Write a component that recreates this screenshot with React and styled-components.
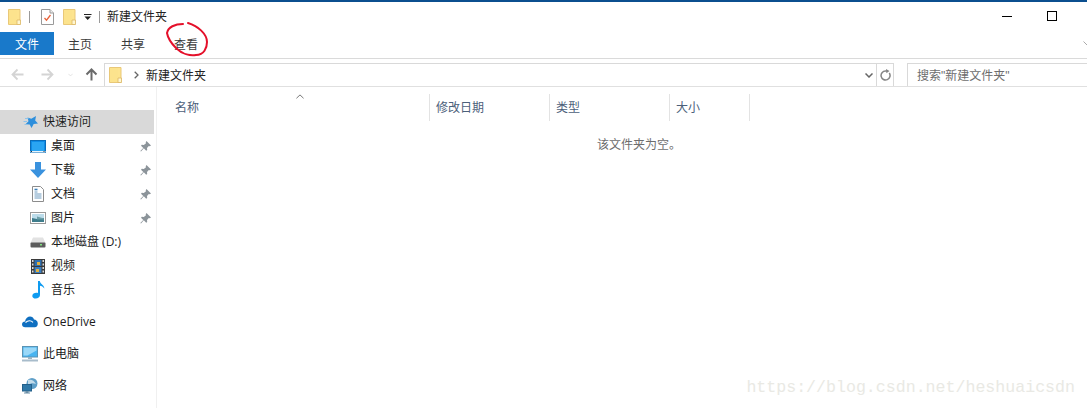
import React from "react";
import styled, { createGlobalStyle } from "styled-components";

const Global = createGlobalStyle`
  html, body { margin: 0; padding: 0; background: #fff; overflow: hidden; }
  * { box-sizing: border-box; }
  #root { font-family: "Noto Sans CJK SC", "Liberation Sans", sans-serif; font-size: 12px; color: #1a1a1a; }
`;

const Window = styled.div`
  position: relative;
  width: 1087px;
  height: 408px;
  overflow: hidden;
  background: #fff;
  border-top: 2px solid #0b4f8f;
  display: flex;
  flex-direction: column;
`;
const TitleBar = styled.div`
  height: 30px;
  display: flex;
  align-items: center;
  padding-left: 8px;
  flex: none;
`;
const QuickBtn = styled.span`
  display: flex;
  margin-left: ${(p) => p.$ml || 0}px;
`;
const VSep = styled.span`
  width: 1px;
  height: 12px;
  background: #9a9a9a;
  margin-left: ${(p) => p.$ml}px;
`;
const TitleText = styled.span`
  margin-left: 7px;
  line-height: 16px;
  padding-bottom: 2px;
  color: #222;
`;
const WinControls = styled.div`
  margin-left: auto;
  display: flex;
  align-items: center;
  padding-right: 30px;
  gap: 35px;
  margin-top: -2px;
`;
const MinLine = styled.span`
  width: 10px;
  height: 1px;
  background: #000;
`;
const MaxBox = styled.span`
  width: 10px;
  height: 10px;
  border: 1px solid #000;
`;
const Ribbon = styled.div`
  height: 27px;
  display: flex;
  align-items: flex-start;
  border-bottom: 1px solid #dadada;
  position: relative;
  flex: none;
`;
const Tab = styled.div`
  width: ${(p) => p.$w}px;
  height: 23px;
  display: flex;
  align-items: center;
  justify-content: ${(p) => (p.$file ? "center" : "flex-start")};
  padding-left: ${(p) => (p.$file ? 0 : p.$pl)}px;
  background: ${(p) => (p.$file ? "#1979ca" : "transparent")};
  color: ${(p) => (p.$file ? "#fff" : "#3b3b3b")};
`;
const RibbonChevron = styled.span`
  position: absolute;
  right: -4px;
  top: 9px;
  display: flex;
`;
const AddressRow = styled.div`
  height: 28px;
  display: flex;
  align-items: flex-end;
  border-bottom: 1px solid #e0e0e0;
  flex: none;
`;
const NavGroup = styled.div`
  width: 104px;
  height: 23px;
  display: flex;
  align-items: center;
  padding-left: 11px;
`;
const NavIcon = styled.span`
  display: flex;
  margin-left: ${(p) => p.$ml || 0}px;
`;
const AddressBox = styled.div`
  width: 790px;
  height: 23px;
  border: 1px solid #d9d9d9;
  border-bottom: none;
  display: flex;
  align-items: center;
  padding-left: 4px;
`;
const Crumb = styled.span`
  margin-left: ${(p) => p.$ml}px;
  padding-bottom: ${(p) => p.$pb || 0}px;
  display: flex;
  align-items: center;
  color: #222;
`;
const AddressTail = styled.div`
  margin-left: auto;
  display: flex;
  height: 100%;
  align-items: center;
`;
const Refresh = styled.span`
  width: 17px;
  height: 100%;
  border-left: 1px solid #d9d9d9;
  margin-left: 3px;
  display: flex;
  align-items: center;
  justify-content: center;
`;
const SearchBox = styled.div`
  margin-left: 13px;
  flex: 1;
  height: 23px;
  border: 1px solid #d9d9d9;
  border-right: none;
  border-bottom: none;
  padding: 0 0 2px 9px;
  display: flex;
  align-items: center;
  font-family: "Liberation Sans", "Noto Sans CJK SC", sans-serif;
  color: #6d6d6d;
`;
const Body = styled.div`
  flex: 1;
  display: flex;
  min-height: 0;
`;
const Sidebar = styled.div`
  width: 157px;
  flex: none;
  border-right: 1px solid #f0f0f0;
  padding-top: 23px;
  font-family: "Open Sans", "Noto Sans CJK SC", sans-serif;
`;
const Group = styled.div`
  margin-bottom: ${(p) => p.$mb || 0}px;
`;
const NavRow = styled.div`
  height: 24px;
  width: 154px;
  display: flex;
  align-items: center;
  padding-left: ${(p) => (p.$child ? 30 : 22)}px;
  background: ${(p) => (p.$active ? "#d9d9d9" : "transparent")};
  color: #1c1c1c;
`;
const NavGlyph = styled.span`
  width: 16px;
  height: 18px;
  margin-right: 5px;
  display: flex;
  align-items: center;
  justify-content: center;
  flex: none;
`;
const NavLabel = styled.span`
  padding-bottom: ${(p) => (p.$latin ? 1 : 3)}px;
`;
const PinWrap = styled.span`
  margin-left: auto;
  margin-right: 3px;
  display: flex;
`;
const Content = styled.div`
  flex: 1;
  min-width: 0;
`;
const Columns = styled.div`
  display: flex;
  height: 27px;
  margin-top: 7px;
`;
const Column = styled.div`
  position: relative;
  width: ${(p) => p.$w}px;
  padding: 0 0 2px ${(p) => p.$pl}px;
  border-right: 1px solid #e3e3e3;
  display: flex;
  align-items: center;
  color: #4c607a;
`;
const SortMark = styled.span`
  position: absolute;
  left: 139px;
  top: 0;
  display: flex;
`;
const Empty = styled.div`
  margin-top: 14px;
  padding-left: 440px;
  line-height: 18px;
  color: #6d6d6d;
`;
const Watermark = styled.div`
  position: absolute;
  right: 12px;
  bottom: 10px;
  font-family: "Liberation Mono", monospace;
  font-size: 16.6px;
  line-height: 20px;
  color: #e9e9e4;
`;
const Scribble = styled.svg`
  position: absolute;
  left: 160px;
  top: 18px;
`;

const Folder = () => (
  <svg width="13" height="16" viewBox="0 0 13 16">
    <path d="M.5.5h11.500v15H.5z" fill="#fde48f" stroke="#e9c878" />
    <path d="M1 1h8v14H1z" fill="#fce38d" />
    <path d="M9 11h3.500v4.500H9z" fill="#fff6cf" stroke="#dcb868" strokeWidth=".8" />
  </svg>
);
const CheckDoc = () => (
  <svg width="13" height="16" viewBox="0 0 13 16">
    <path d="M.5.5h8.500l3.500 3.500v11.500H.5z" fill="#fff" stroke="#9a9a9a" />
    <path d="M9 .5v3.500h3.500" fill="#eee" stroke="#9a9a9a" />
    <path d="M3.500 9l2 2.200L9.500 6" fill="none" stroke="#e8623a" strokeWidth="1.300" />
  </svg>
);
const DropArrow = () => (
  <svg width="8" height="8" viewBox="0 0 8 8">
    <path d="M0 1h7.500v1H0zM.5 3.500h6.500L3.700 7z" fill="#222" />
  </svg>
);
const Arrow = ({ dir = "left", color = "#d4d4d4", w = 1.800, size = 13 }) => (
  <svg width={size} height={size} viewBox="0 0 13 13" style={{ transform: dir === "right" ? "scaleX(-1)" : dir === "up" ? "rotate(90deg)" : "none" }}>
    <path d="M12.500 6.500H1.500M6.500 1.500l-5 5 5 5" fill="none" stroke={color} strokeWidth={w} />
  </svg>
);
const Chev = ({ color = "#777", w = 1.500, width = 8, height = 5 }) => (
  <svg width={width} height={height} viewBox="0 0 8 5">
    <path d="M.5.5L4 4 7.500.5" fill="none" stroke={color} strokeWidth={w} />
  </svg>
);
const RefreshIcon = () => (
  <svg width="11" height="12" viewBox="0 0 11 12">
    <path d="M9.300 4A4.500 4.500 0 1 1 5.500 2H7" fill="none" stroke="#858585" strokeWidth="1.500" />
    <path d="M6 0l3.500 2L6.400 4.300z" fill="#858585" />
  </svg>
);
const Pin = () => (
  <svg width="11" height="11" viewBox="0 0 11 11">
    <path d="M6.500 0L11 4.500 9.800 5.300 8.800 4.900 7 7l.2 2-1 .8L3.800 7.200 1 10.500.3 10l3-3L1 4.800l.8-1 2 .2L6 2.200l-.3-1z" fill="#8c949a" />
  </svg>
);
const StarIcon = () => (
  <svg width="16" height="14" viewBox="0 0 16 14">
    <path d="M14 1l-.8 4.600 2.800 3-4.300.5L9.500 13 7.700 9.400 3.500 9.300l3-3L5.500 2.500l3.800 1.300z" fill="#2e8fdc" />
    <path d="M3 3.500h3.500M1.500 6.500h3.500M2.500 9.500h3" stroke="#8fc3ea" strokeWidth="1" />
  </svg>
);
const DesktopIcon = () => (
  <svg width="16" height="13" viewBox="0 0 16 13">
    <rect x=".5" y=".5" width="15" height="12" fill="#0f8ce6" stroke="#0a6cb8" />
    <path d="M2 2h12v9H2z" fill="#2aa5f2" />
    <path d="M.5 11h15v1.500H.5z" fill="#e8f4fc" />
    <path d="M1 11.500h1M13.500 11.500h1" stroke="#333" />
  </svg>
);
const DownloadIcon = () => (
  <svg width="16" height="16" viewBox="0 0 16 16">
    <path d="M5 0h6v7.500h5L8 16 0 7.500h5z" fill="#3a92de" />
  </svg>
);
const DocIcon = () => (
  <svg width="12" height="16" viewBox="0 0 12 16">
    <path d="M.5.5h8l3 3v12H.5z" fill="#fff" stroke="#8c8c8c" />
    <path d="M2.500 6h3M2.500 8h7M2.500 10h7M2.500 12h7" stroke="#6f9cc0" />
    <path d="M2.500 3.500h3" stroke="#3a7fb8" strokeWidth="1.600" />
  </svg>
);
const PictureIcon = () => (
  <svg width="16" height="12" viewBox="0 0 16 12">
    <rect x=".5" y=".5" width="15" height="11" fill="#fff" stroke="#9a9a9a" />
    <path d="M2 2h12v5H2z" fill="#bcdcea" />
    <path d="M2 6l5 1 7-1v4H2z" fill="#3f7d8c" />
    <path d="M7 4.500l7 2v1H7z" fill="#6d9fa8" />
  </svg>
);
const DriveIcon = () => (
  <svg width="16" height="11" viewBox="0 0 16 11">
    <path d="M3 .5h10L15.500 6H.5z" fill="#e2e2e2" />
    <rect x=".5" y="5.500" width="15" height="5" rx="1" fill="#5c5c5c" />
    <rect x="10" y="7" width="2" height="1.500" fill="#7fe07f" />
  </svg>
);
const VideoIcon = () => (
  <svg width="14" height="15" viewBox="0 0 14 15">
    <rect width="14" height="15" fill="#3a3a3a" />
    <path d="M1 1h1.500v2H1zM1 4.500h1.500v2H1zM1 8h1.500v2H1zM1 11.500h1.500v2H1zM11.500 1H13v2h-1.500zM11.500 4.500H13v2h-1.500zM11.500 8H13v2h-1.500zM11.500 11.500H13v2h-1.500z" fill="#ddd" />
    <path d="M3.500 1h7v6h-7z" fill="#2f6fb0" />
    <path d="M3.500 8h7v6h-7z" fill="#3c7fc0" />
    <path d="M6 3h3v3H6zM5 10h3v3H5z" fill="#e0b040" />
  </svg>
);
const MusicIcon = () => (
  <svg width="13" height="18" viewBox="0 0 13 18">
    <path d="M6 0h1.800c.4 3 4.200 3.600 4.600 7.500-1.200-1.800-3-2.500-4.400-2.800V14c0 2.200-2 3.600-4.300 3.600C1.600 17.600.3 16.500.3 15c0-2 2.100-3.200 4-3.200.6 0 1.200.1 1.700.3z" fill="#0f9bf0" />
  </svg>
);
const CloudIcon = () => (
  <svg width="16" height="12" viewBox="0 0 16 12">
    <path d="M3 5.500C3.500 2 6 .5 8 .5c2 0 3.500 1.200 4 3C14 3.700 15.700 5 15.800 7.500c.1 2-1.200 3.800-3 3.800H3.200C1.300 11.300 0 10 0 8.300 0 6.800 1.200 5.600 3 5.500z" fill="#0f6fc0" />
    <path d="M3.500 6.500c2.500-2.500 5.500-2.300 7.500-.2" fill="none" stroke="#fff" strokeWidth="1.100" />
  </svg>
);
const PcIcon = () => (
  <svg width="16" height="16" viewBox="0 0 16 16">
    <rect x=".5" y=".5" width="15" height="10.500" fill="#48b4f0" stroke="#5a93b4" />
    <path d="M1.500 1.500h13v3l-9 5h-4z" fill="#9ad8f8" />
    <path d="M6 11h4v2H6z" fill="#9ab4c4" />
    <path d="M0 13.500h16v2H0z" fill="#a8bccb" />
  </svg>
);
const NetIcon = () => (
  <svg width="16" height="16" viewBox="0 0 16 16">
    <circle cx="10" cy="5.500" r="5.500" fill="#5f9fc8" />
    <path d="M6 2c3-1 6 0 8 4-3-1-5-1-8 1z" fill="#c4dcea" />
    <rect x=".5" y="6.500" width="9" height="6.500" fill="#2f78a8" stroke="#24608a" />
    <path d="M3.500 13h3v1.500h-3zM2 14.500h6v1H2z" fill="#6a8ea6" />
  </svg>
);

const sidebarGroups = [
  {
    mb: 8,
    rows: [
      { label: "快速访问", icon: <StarIcon />, active: true },
      { label: "桌面", icon: <DesktopIcon />, child: true, pin: true },
      { label: "下载", icon: <DownloadIcon />, child: true, pin: true },
      { label: "文档", icon: <DocIcon />, child: true, pin: true },
      { label: "图片", icon: <PictureIcon />, child: true, pin: true },
      { label: "本地磁盘 (D:)", icon: <DriveIcon />, child: true },
      { label: "视频", icon: <VideoIcon />, child: true },
      { label: "音乐", icon: <MusicIcon />, child: true },
    ],
  },
  { mb: 8, rows: [{ label: "OneDrive", icon: <CloudIcon />, latin: true }] },
  { mb: 8, rows: [{ label: "此电脑", icon: <PcIcon /> }] },
  { rows: [{ label: "网络", icon: <NetIcon /> }] },
];

export default function App() {
  return (
    <>
      <Global />
      <Window>
        <TitleBar>
          <QuickBtn><Folder /></QuickBtn>
          <VSep $ml={8} />
          <QuickBtn $ml={11}><CheckDoc /></QuickBtn>
          <QuickBtn $ml={9}><Folder /></QuickBtn>
          <QuickBtn $ml={8}><DropArrow /></QuickBtn>
          <VSep $ml={7} />
          <TitleText>新建文件夹</TitleText>
          <WinControls>
            <MinLine />
            <MaxBox />
          </WinControls>
        </TitleBar>
        <Ribbon>
          <Tab $file $w={54}>文件</Tab>
          <Tab $w={53} $pl={14}>主页</Tab>
          <Tab $w={53} $pl={14}>共享</Tab>
          <Tab $w={53} $pl={14}>查看</Tab>
          <RibbonChevron><Chev color="#aaa" w={1} /></RibbonChevron>
        </Ribbon>
        <AddressRow>
          <NavGroup>
            <NavIcon><Arrow /></NavIcon>
            <NavIcon $ml={17}><Arrow dir="right" /></NavIcon>
            <NavIcon $ml={14}><Chev color="#d4d4d4" w={1} width={5} height={4} /></NavIcon>
            <NavIcon $ml={12}><Arrow dir="up" color="#6b6b6b" w={2} /></NavIcon>
          </NavGroup>
          <AddressBox>
            <Folder />
            <Crumb $ml={12}>
              <svg width="5" height="8" viewBox="0 0 5 8"><path d="M.7.7L4 4 .7 7.300" fill="none" stroke="#666" strokeWidth="1.300" /></svg>
            </Crumb>
            <Crumb $ml={7} $pb={2}>新建文件夹</Crumb>
            <AddressTail>
              <Chev color="#666" w={1.500} />
              <Refresh><RefreshIcon /></Refresh>
            </AddressTail>
          </AddressBox>
          <SearchBox>搜索"新建文件夹"</SearchBox>
        </AddressRow>
        <Body>
          <Sidebar>
            {sidebarGroups.map((g, i) => (
              <Group key={i} $mb={g.mb}>
                {g.rows.map((r) => (
                  <NavRow key={r.label} $child={r.child} $active={r.active}>
                    <NavGlyph>{r.icon}</NavGlyph>
                    <NavLabel $latin={r.latin}>{r.label}</NavLabel>
                    {r.pin && <PinWrap><Pin /></PinWrap>}
                  </NavRow>
                ))}
              </Group>
            ))}
          </Sidebar>
          <Content>
            <Columns>
              <Column $w={273} $pl={18}>
                名称
                <SortMark>
                  <svg width="8" height="5" viewBox="0 0 9 5"><path d="M.5 4.500L4.500.7l4 3.800" fill="none" stroke="#666" strokeWidth="1" /></svg>
                </SortMark>
              </Column>
              <Column $w={120} $pl={6}>修改日期</Column>
              <Column $w={120} $pl={6}>类型</Column>
              <Column $w={80} $pl={6}>大小</Column>
            </Columns>
            <Empty>该文件夹为空。</Empty>
          </Content>
        </Body>
        <Watermark>https://blog.csdn.net/heshuaicsdn</Watermark>
        <Scribble width="54" height="40" viewBox="0 0 54 40">
          <path d="M23 4C15 4 8 7 7 13c1 6 5 11 9 15 6 6 14 8 20 7 8 0 11-7 11-13C47 14 38 6 28 3" fill="none" stroke="#e4102a" strokeWidth="2" strokeLinecap="round" />
        </Scribble>
      </Window>
    </>
  );
}
